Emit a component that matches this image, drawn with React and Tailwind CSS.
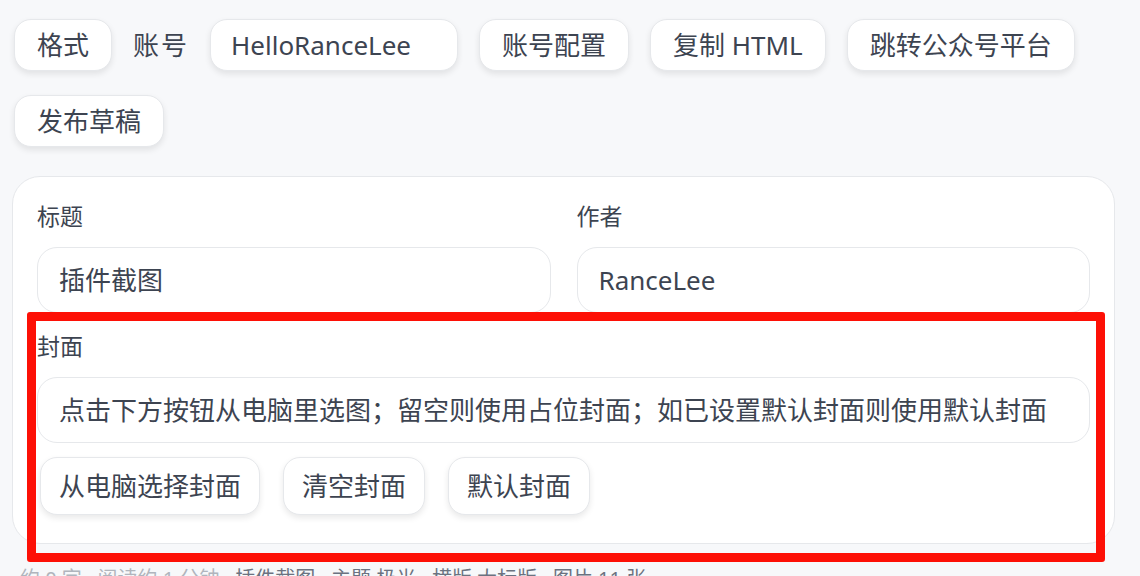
import React from 'react';

const font = { fontFamily: '"Noto Sans", "Noto Sans CJK SC", sans-serif' };

const Btn = ({ children, tall }) => (
  <button
    className={`bg-white border border-[#e6e8eb] rounded-[17px] text-[26px] leading-[36px] text-[#3d4451] shadow-[0_3px_6px_rgba(0,0,0,0.09)] ${tall ? 'py-[10px] px-[18px]' : 'py-[7px] px-[22px]'}`}
  >
    {children}
  </button>
);

const Field = ({ label, value, className = '' }) => (
  <div className={`flex flex-col ${className}`}>
    <label className="text-[23px] leading-[32px] text-[#3d4451]">{label}</label>
    <div className="mt-[15px] bg-white border border-[#e6e8eb] rounded-[20px] px-[21px] py-[14px] text-[26px] leading-[36px] text-[#3d4451]">
      {value}
    </div>
  </div>
);

export default function App() {
  return (
    <div className="min-h-screen bg-[#f7f8fa] pt-[19px] pl-3" style={font}>
      <div className="flex flex-wrap items-center gap-x-[21px] gap-y-6 pl-[2px] w-[1090px]">
        <Btn>格式</Btn>
        <span className="text-[26px] leading-[36px] tracking-[2px] text-[#3d4451]">账号</span>
        <div className="w-[248px] bg-white border border-[#e6e8eb] rounded-[17px] px-[20px] py-[7px] text-[26px] leading-[36px] text-[#3d4451] shadow-[0_3px_6px_rgba(0,0,0,0.09)]">
          HelloRanceLee
        </div>
        <Btn>账号配置</Btn>
        <Btn>复制 HTML</Btn>
        <Btn>跳转公众号平台</Btn>
        <Btn>发布草稿</Btn>
      </div>

      <div className="relative mt-[29px] w-[1103px]">
        <div className="bg-white border border-[#e6e8eb] rounded-[28px] px-6 pt-[23px] pb-[28px]">
          <div className="grid grid-cols-2 gap-x-[26px]">
            <Field label="标题" value="插件截图" />
            <Field label="作者" value="RanceLee" />
          </div>
          <Field className="mt-[17px]" label="封面" value="点击下方按钮从电脑里选图；留空则使用占位封面；如已设置默认封面则使用默认封面" />
          <div className="mt-[14px] flex gap-[23px] pl-[3px]">
            <Btn tall>从电脑选择封面</Btn>
            <Btn tall>清空封面</Btn>
            <Btn tall>默认封面</Btn>
          </div>
        </div>
        <div className="absolute left-[15px] top-[136px] w-[1078px] h-[250px] border-[9px] border-[#fd1006] rounded-[3px] pointer-events-none" />
        <p className="mt-[21px] pl-2 text-[20px] leading-[28px] text-[#6b7280] whitespace-nowrap">
          <span className="text-[#b0b5bd]">约 0 字 · 阅读约 1 分钟 · </span>插件截图 · 主题 极光 · 横版 大标版 · 图片 11 张
        </p>
      </div>
    </div>
  );
}
